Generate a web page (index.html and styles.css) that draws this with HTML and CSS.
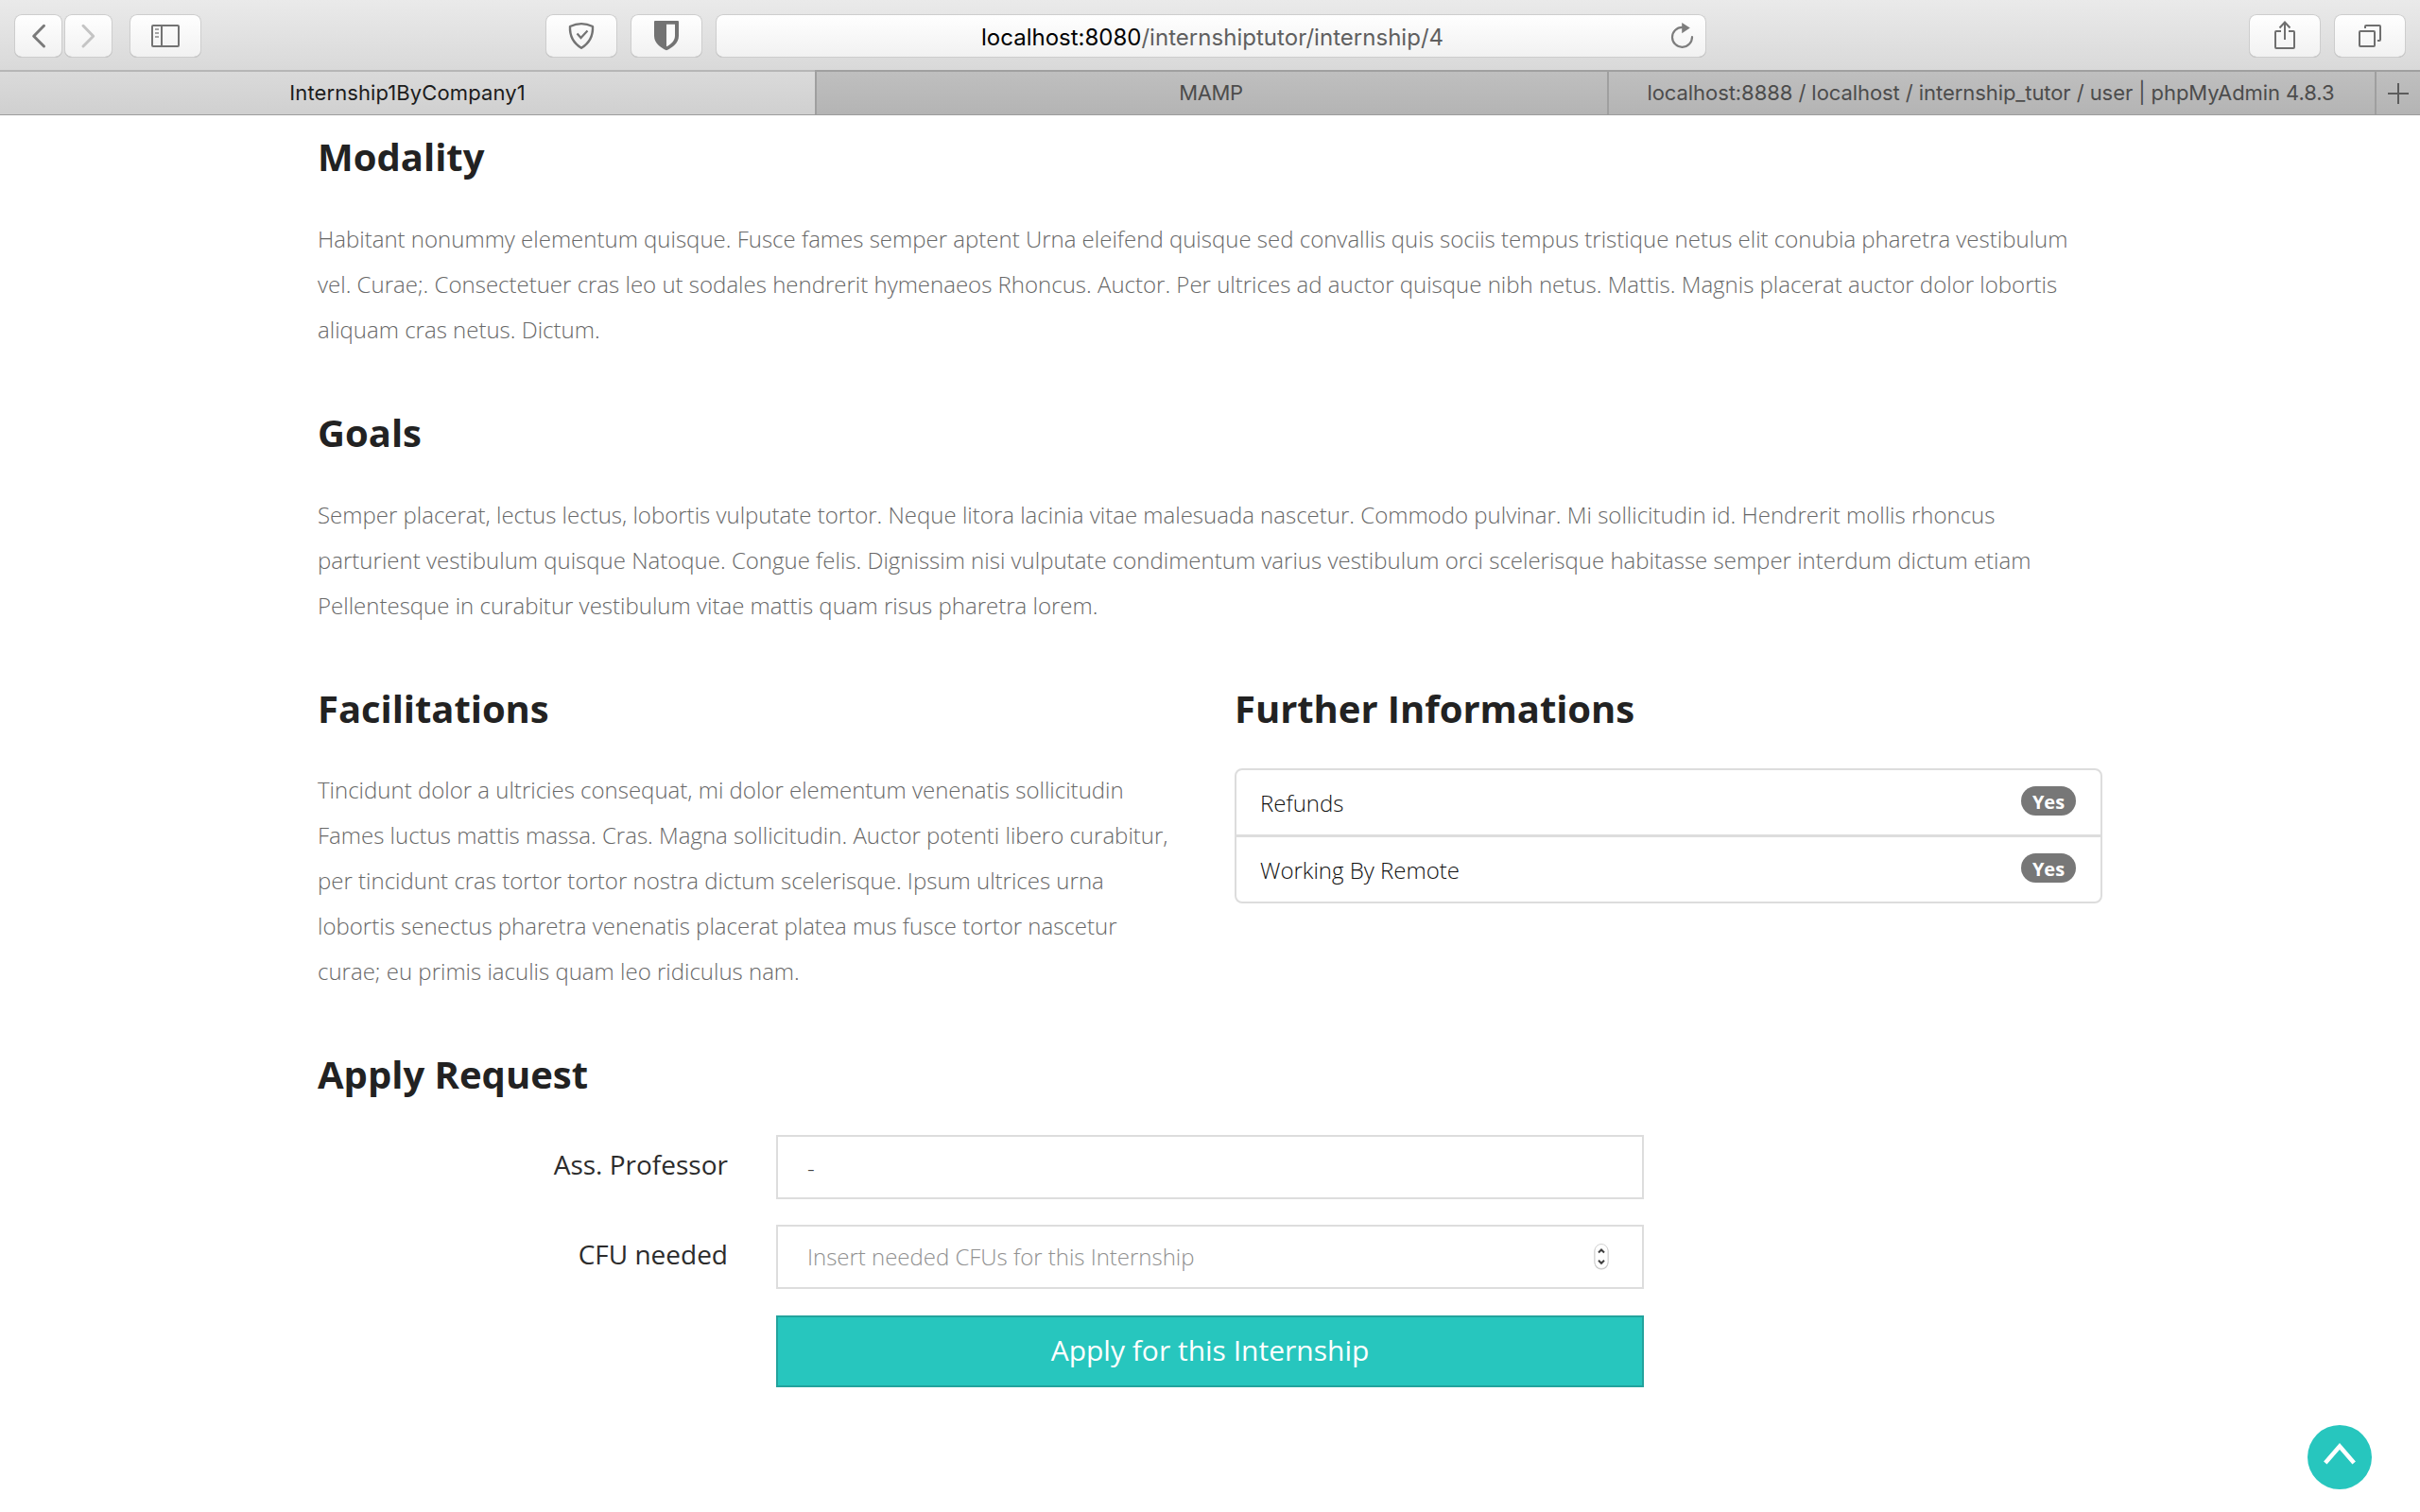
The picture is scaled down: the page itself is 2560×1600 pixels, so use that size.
FILE: index.html
```
<!DOCTYPE html>
<html lang="en">
<head>
<meta charset="utf-8">
<title>Internship1ByCompany1</title>
<link rel="stylesheet" href="styles.css">
</head>
<body>
<header class="browser">
  <div class="toolbar">
    <div class="group nav">
      <button class="tool narrow" aria-label="Back"><svg viewBox="15 15 51 46"><path d="M46.5 27.3 35.7 38.2 46.500 49" fill="none" stroke="#7a7a7a" stroke-width="3" stroke-linecap="round" stroke-linejoin="round"/></svg></button>
      <button class="tool narrow" aria-label="Forward"><svg viewBox="68 15 51 46"><path d="M88 27.300 98.700 38.200 88 49" fill="none" stroke="#c4c4c4" stroke-width="3" stroke-linecap="round" stroke-linejoin="round"/></svg></button>
    </div>
    <button class="tool sidebar" aria-label="Sidebar"><svg viewBox="137 15 76 46"><rect x="161" y="27" width="28" height="22" rx="1" fill="none" stroke="#737373" stroke-width="2"/><path d="M171 27v22" stroke="#737373" stroke-width="2"/><path d="M164 31h4M164 35h4M164 39h4" stroke="#a5a5a5" stroke-width="2"/></svg></button>
    <div class="group extensions">
      <button class="tool" aria-label="Shield"><svg viewBox="577 15 76 46"><path d="M603 28Q615 22.300 627 28C627.500 38 623.500 45.500 615 50.800 606.500 45.500 602.500 38 603 28Z" fill="none" stroke="#737373" stroke-width="2.400" stroke-linejoin="round"/><path d="M610.500 35.500 614.500 40 621.500 32.500" fill="none" stroke="#737373" stroke-width="2.200"/></svg></button>
      <button class="tool" aria-label="Password manager"><svg viewBox="667 15 76 46"><path d="M693 22H717Q718 22 718 23V38C718 45.500 711 50.500 705 53.300 699 50.500 692 45.500 692 38V23Q692 22 693 22Z" fill="#737373"/><path d="M705 25.700H714V38C714 43.500 709 47.200 705 49.300Z" fill="#fbfbfb"/></svg></button>
      <div class="address"><span class="host">localhost:8080</span><span class="path">/internshiptutor/internship/4</span>
        <svg class="reload" viewBox="1764 15 32 46"><path d="M1779.500 28.800A10.500 10.500 0 1 0 1790 39" fill="none" stroke="#7d7d7d" stroke-width="2.200" stroke-linecap="round"/><path d="M1779.200 24 1787.800 29.600 1779.200 35.200Z" fill="#7d7d7d"/></svg>
      </div>
    </div>
    <div class="group right">
      <button class="tool" aria-label="Share"><svg viewBox="2379 15 76 46"><path d="M2413 33H2408Q2407 33 2407 34V50Q2407 51 2408 51H2426Q2427 51 2427 50V34Q2427 33 2426 33H2421" fill="none" stroke="#6f6f6f" stroke-width="2"/><path d="M2417 42V24M2411.500 29.500 2417 23.500 2422.500 29.500" fill="none" stroke="#6f6f6f" stroke-width="2"/></svg></button>
      <button class="tool" aria-label="Show tabs"><svg viewBox="2469 15 76 46"><rect x="2496" y="33" width="16" height="16" rx="1" fill="none" stroke="#6f6f6f" stroke-width="2"/><path d="M2502 30V28Q2502 27 2503 27H2517Q2518 27 2518 28V42Q2518 43 2517 43H2515" fill="none" stroke="#6f6f6f" stroke-width="2"/></svg></button>
    </div>
  </div>
  <nav class="tabs">
    <div class="tab active"><span class="t-active">Internship1ByCompany1</span></div>
    <div class="tab"><span class="t-short">MAMP</span></div>
    <div class="tab"><span class="t-long">localhost:8888 / localhost / internship_tutor / user | phpMyAdmin 4.8.3</span></div>
    <div class="tab"><svg class="plus" viewBox="0 0 22 22"><path d="M11 0v22M0 11h22" stroke="#5c5c5c" stroke-width="2"/></svg></div>
  </nav>
</header>

<main class="container">
  <section>
    <h2>Modality</h2>
    <p>Habitant nonummy elementum quisque. Fusce fames semper aptent Urna eleifend quisque sed convallis quis sociis tempus tristique netus elit conubia pharetra vestibulum<br>vel. Curae;. Consectetuer cras leo ut sodales hendrerit hymenaeos Rhoncus. Auctor. Per ultrices ad auctor quisque nibh netus. Mattis. Magnis placerat auctor dolor lobortis<br>aliquam cras netus. Dictum.</p>
  </section>
  <section>
    <h2>Goals</h2>
    <p>Semper placerat, lectus lectus, lobortis vulputate tortor. Neque litora lacinia vitae malesuada nascetur. Commodo pulvinar. Mi sollicitudin id. Hendrerit mollis rhoncus<br>parturient vestibulum quisque Natoque. Congue felis. Dignissim nisi vulputate condimentum varius vestibulum orci scelerisque habitasse semper interdum dictum etiam<br>Pellentesque in curabitur vestibulum vitae mattis quam risus pharetra lorem.</p>
  </section>
  <div class="columns">
    <section>
      <h2>Facilitations</h2>
      <p>Tincidunt dolor a ultricies consequat, mi dolor elementum venenatis sollicitudin<br>Fames luctus mattis massa. Cras. Magna sollicitudin. Auctor potenti libero curabitur,<br>per tincidunt cras tortor tortor nostra dictum scelerisque. Ipsum ultrices urna<br>lobortis senectus pharetra venenatis placerat platea mus fusce tortor nascetur<br>curae; eu primis iaculis quam leo ridiculus nam.</p>
    </section>
    <section>
      <h2>Further Informations</h2>
      <ul class="list">
        <li><span>Refunds</span><span class="badge">Yes</span></li>
        <li><span>Working By Remote</span><span class="badge">Yes</span></li>
      </ul>
    </section>
  </div>
  <section>
    <h2>Apply Request</h2>
    <form class="apply">
      <span class="label">Ass. Professor</span>
      <div class="field"><span>-</span></div>
      <span class="label">CFU needed</span>
      <div class="field"><span class="hint">Insert needed CFUs for this Internship</span>
        <svg class="spinner" viewBox="0 0 20 32"><rect x="2.500" y="3" width="15" height="26.500" rx="7.500" fill="#c2c2c2"/><rect x="3" y="2.500" width="14" height="26" rx="7" fill="#fff" stroke="#d2d2d2"/><path d="M7 11.500 10 8.500 13 11.500M7 19.800 10 22.800 13 19.800" fill="none" stroke="#3f3f3f" stroke-width="2"/></svg>
      </div>
      <button type="button" class="submit">Apply for this Internship</button>
    </form>
  </section>
</main>
<a class="to-top" aria-label="Back to top"><svg viewBox="0 0 68 68"><path d="M18.800 40 34 22.500 49.200 40" fill="none" stroke="#fff" stroke-width="4.500"/></svg></a>
</body>
</html>
```
FILE: styles.css
```
* { box-sizing: border-box; }
body {
  margin: 0;
  height: 1600px;
  overflow: hidden;
  background: #fff;
  color: #333;
  font-family: "Open Sans", sans-serif;
}
button { padding: 0; margin: 0; font: inherit; }
svg { display: block; }

/* browser window */
.browser { font-family: Inter, sans-serif; }
.toolbar {
  display: flex;
  height: 74px;
  padding: 15px 15px 0;
  background: linear-gradient(#eaeaea, #d9d9d9);
}
.group { display: flex; gap: 14px; }
.nav { gap: 2px; }
.tool {
  flex: none;
  width: 76px;
  height: 46px;
  border: 0;
  border-radius: 8px;
  background: linear-gradient(#fff, #f1f1f1);
  box-shadow: inset 0 0 0 1px #cdcdcd, inset 0 -1px 0 #a9a9a9;
}
.tool svg { width: 100%; height: 46px; }
.narrow { width: 51px; }
.sidebar { margin-left: 18px; }
.extensions { margin-left: 364px; }
.right { margin-left: auto; }
.address {
  display: flex;
  position: relative;
  width: 1048px;
  height: 46px;
  padding-left: 281px;
  border-radius: 8px;
  background: linear-gradient(#fff, #f1f1f1);
  box-shadow: inset 0 0 0 1px #cdcdcd, inset 0 -1px 0 #a9a9a9;
  font-size: 24px;
  line-height: 49px;
  white-space: nowrap;
}
.host { color: #000; }
.path { color: #5f5f5f; letter-spacing: 0.03px; }
.reload { position: absolute; right: 9px; top: 0; width: 32px; height: 46px; }

.tabs {
  display: grid;
  grid-template-columns: 862px 838px 812px 48px;
  height: 48px;
  border-bottom: 2px solid #9c9c9c;
  font-size: 22px;
  line-height: 45px;
  white-space: nowrap;
}
.tab {
  display: flex;
  justify-content: center;
  border-top: 2px solid #a0a0a0;
  background: linear-gradient(#bfbfbf, #b4b4b4);
  box-shadow: inset 2px 0 0 #9f9f9f;
  color: #4c4c4c;
}
.tab.active {
  border-top-color: #b6b6b6;
  background: linear-gradient(#dadada, #d0d0d0);
  box-shadow: none;
  color: #1c1c1c;
}
.t-active { letter-spacing: 0.1px; }
.t-short { letter-spacing: -0.4px; }
.t-long { letter-spacing: -0.07px; }
.plus { width: 22px; height: 22px; margin: 12px 0 0 2px; }

/* page */
.container {
  width: 1888px;
  margin: 0 auto;
  padding-top: 22px;
}
h2 {
  margin: 0 0 41px;
  color: #222;
  font-size: 40px;
  font-weight: 700;
  line-height: 44px;
}
p {
  margin: 0 0 63px;
  color: #686868;
  font-size: 24px;
  font-weight: 300;
  line-height: 48px;
  white-space: nowrap;
}
.columns {
  display: grid;
  grid-template-columns: 918px 918px;
  gap: 52px;
}
.columns p { margin-top: -1px; }
.columns h2 { letter-spacing: -0.05px; }
.list {
  margin: 0;
  padding: 0;
  list-style: none;
  border: 2px solid #ddd;
  border-radius: 8px;
  color: #111;
  font-size: 24px;
  font-weight: 300;
}
.list li {
  display: flex;
  justify-content: space-between;
  height: 68px;
  padding: 17px 26px 0 25px;
  line-height: 36px;
}
.list li + li { height: 71px; border-top: 3px solid #ddd; }
.badge {
  width: 58px;
  height: 31px;
  border-radius: 16px;
  background: #777;
  color: #fff;
  font-size: 20px;
  font-weight: 700;
  line-height: 33px;
  text-align: center;
}
.apply {
  display: grid;
  grid-template-columns: 434px 918px;
  column-gap: 51px;
  row-gap: 27px;
  margin-top: 42px;
}
.apply .label {
  padding-top: 12px;
  color: #2c2c2c;
  font-size: 28px;
  line-height: 38px;
  text-align: right;
}
.field {
  display: flex;
  justify-content: space-between;
  align-items: center;
  height: 68px;
  padding: 0 33px 0 31px;
  border: 2px solid #ddd;
  color: #444;
  font-size: 24px;
  font-weight: 300;
}
.hint { margin-top: -2px; color: #909090; letter-spacing: -0.02px; }
.spinner { width: 20px; height: 32px; }
.submit {
  grid-column: 2;
  height: 76px;
  margin-top: 1px;
  padding-bottom: 2px;
  border: 2px solid #22a39d;
  background: #27c6be;
  color: #fff;
  font-size: 30px;
  line-height: 70px;
}
.to-top {
  position: fixed;
  right: 51px;
  bottom: 24px;
  width: 68px;
  height: 68px;
  border-radius: 50%;
  background: #27c6be;
}
```
